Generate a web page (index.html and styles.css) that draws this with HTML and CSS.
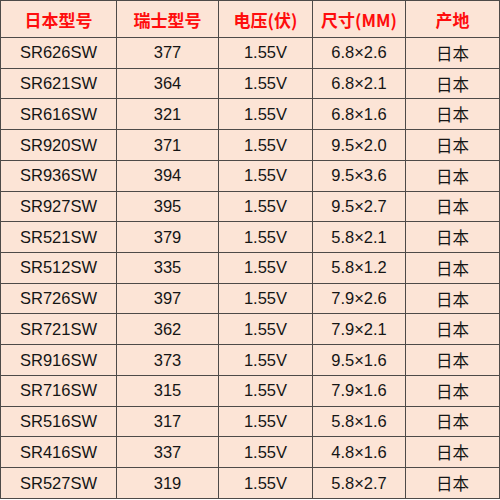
FILE: index.html
```html
<!DOCTYPE html>
<html lang="zh">
<head>
<meta charset="utf-8">
<link rel="stylesheet" href="styles.css">
</head>
<body>
<table class="spec">
<colgroup>
<col class="c1"><col class="c2"><col class="c3"><col class="c4"><col class="c5">
</colgroup>
<thead>
<tr><th>日本型号</th><th>瑞士型号</th><th>电压(伏)</th><th>尺寸(MM)</th><th>产地</th></tr>
</thead>
<tbody>
<tr><td>SR626SW</td><td>377</td><td>1.55V</td><td>6.8×2.6</td><td>日本</td></tr>
<tr><td>SR621SW</td><td>364</td><td>1.55V</td><td>6.8×2.1</td><td>日本</td></tr>
<tr><td>SR616SW</td><td>321</td><td>1.55V</td><td>6.8×1.6</td><td>日本</td></tr>
<tr><td>SR920SW</td><td>371</td><td>1.55V</td><td>9.5×2.0</td><td>日本</td></tr>
<tr><td>SR936SW</td><td>394</td><td>1.55V</td><td>9.5×3.6</td><td>日本</td></tr>
<tr><td>SR927SW</td><td>395</td><td>1.55V</td><td>9.5×2.7</td><td>日本</td></tr>
<tr><td>SR521SW</td><td>379</td><td>1.55V</td><td>5.8×2.1</td><td>日本</td></tr>
<tr><td>SR512SW</td><td>335</td><td>1.55V</td><td>5.8×1.2</td><td>日本</td></tr>
<tr><td>SR726SW</td><td>397</td><td>1.55V</td><td>7.9×2.6</td><td>日本</td></tr>
<tr><td>SR721SW</td><td>362</td><td>1.55V</td><td>7.9×2.1</td><td>日本</td></tr>
<tr><td>SR916SW</td><td>373</td><td>1.55V</td><td>9.5×1.6</td><td>日本</td></tr>
<tr><td>SR716SW</td><td>315</td><td>1.55V</td><td>7.9×1.6</td><td>日本</td></tr>
<tr><td>SR516SW</td><td>317</td><td>1.55V</td><td>5.8×1.6</td><td>日本</td></tr>
<tr><td>SR416SW</td><td>337</td><td>1.55V</td><td>4.8×1.6</td><td>日本</td></tr>
<tr><td>SR527SW</td><td>319</td><td>1.55V</td><td>5.8×2.7</td><td>日本</td></tr>
</tbody>
</table>
</body>
</html>
```

FILE: styles.css
```css
html, body {
  margin: 0;
  padding: 0;
  background: #ffffff;
}
.spec {
  border-collapse: collapse;
  table-layout: fixed;
  width: 499px;
  height: 499px;
  background: #fce4d6;
  font-family: "Liberation Sans", "Noto Sans CJK SC", sans-serif;
  color: #151515;
}
.c1 { width: 116px; }
.c2 { width: 102px; }
.c3 { width: 94px; }
.c4 { width: 93px; }
.c5 { width: 94px; }
.spec th, .spec td {
  border: 1.5px solid #4e4a48;
  text-align: center;
  padding: 0;
}
.spec th {
  height: 36px;
  color: #ff0d0d;
  font-weight: bold;
  font-size: 17px;
  font-family: "Noto Sans CJK SC", sans-serif;
}
.spec td {
  height: 29px;
  font-size: 16.5px;
}
```
